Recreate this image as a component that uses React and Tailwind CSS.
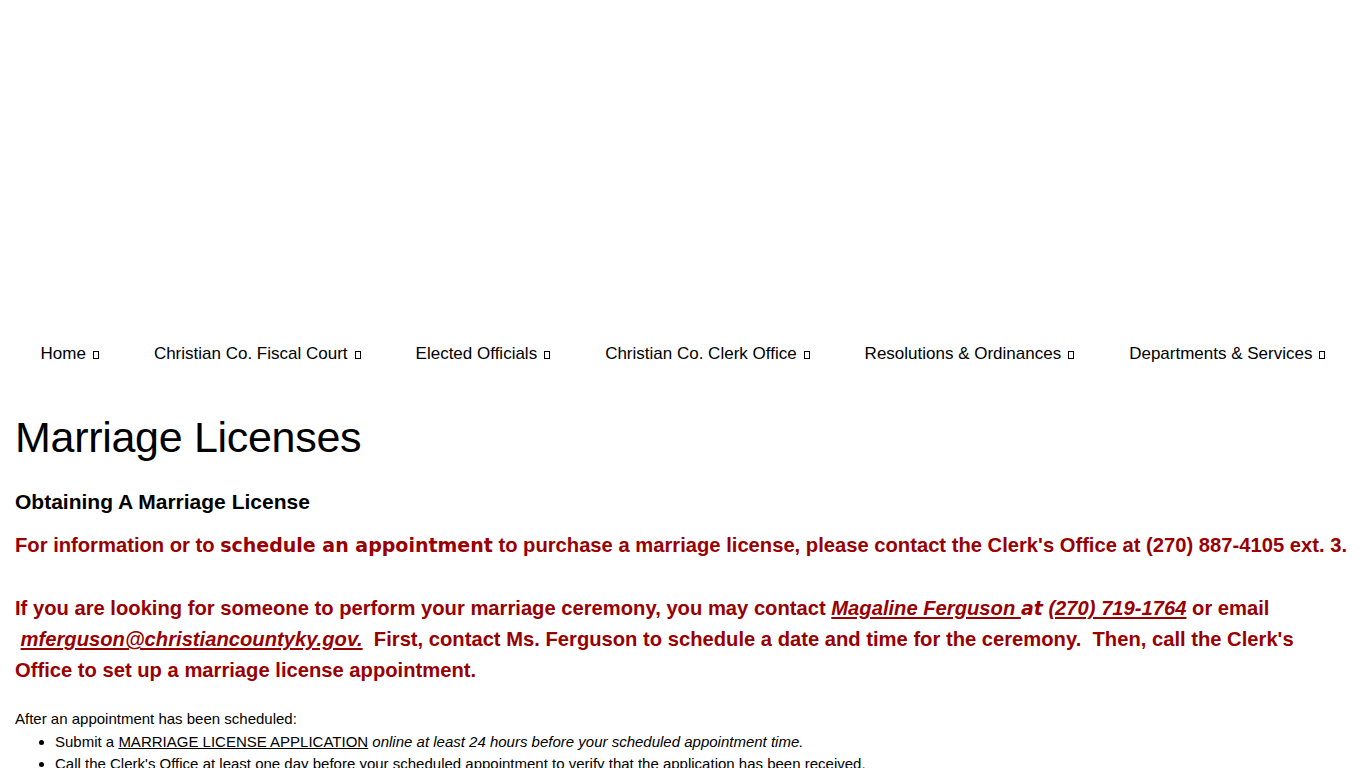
import React from "react";

const Box = () => (
  <span className="inline-block w-[6px] h-[8px] border border-black ml-[7px] align-[0px]" />
);

const navItems = [
  "Home",
  "Christian Co. Fiscal Court",
  "Elected Officials",
  "Christian Co. Clerk Office",
  "Resolutions & Ordinances",
  "Departments & Services",
];

export default function App() {
  return (
    <div className="bg-white text-black min-h-[768px] font-['Liberation_Sans',Arial,sans-serif]">
      <div className="h-[330px]" />
      <nav className="flex justify-center gap-[55px] h-[47px] items-center text-[17px]">
        {navItems.map((n) => (
          <span key={n} className="whitespace-nowrap">
            {n}
            <Box />
          </span>
        ))}
      </nav>
      <main className="px-[15px]">
        <h1 className="text-[43px] leading-[52px] mt-[34px] tracking-[-0.3px]">Marriage Licenses</h1>
        <h2 className="text-[21px] font-bold mt-[26px] leading-[26px]">Obtaining A Marriage License</h2>
        <div className="text-[#990000] font-bold text-[20.2px] leading-[31px] mt-[15px]">
          <p>
            For information or to{" "}
            <span className="font-['DejaVu_Sans',sans-serif] text-[19px]">schedule an appointment</span>{" "}
            to purchase a marriage license, please contact the Clerk's Office at (270) 887-4105 ext. 3.
          </p>
          <p>&nbsp;</p>
          <p className="mt-[1px]">
            If you are looking for someone to perform your marriage ceremony, you may contact{" "}
            <span className="italic underline">Magaline Ferguson </span>
            <span className="italic font-['DejaVu_Sans',sans-serif] text-[19px]">at</span>{" "}
            <span className="italic underline">(270) 719-1764</span> or email
            <br />
            &nbsp;<span className="italic underline">mferguson@christiancountyky.gov.</span>&nbsp; First, contact
            Ms. Ferguson to schedule a date and time for the ceremony.&nbsp; Then, call the Clerk's Office to set up
            a marriage license appointment.
          </p>
        </div>
        <p className="text-[15px] mt-[23px] leading-[20px]">After an appointment has been scheduled:</p>
        <ul className="list-disc pl-[40px] text-[15px] leading-[22px] mt-[2px]">
          <li>
            Submit a <span className="underline">MARRIAGE LICENSE APPLICATION</span>{" "}
            <span className="italic">online at least 24 hours before your scheduled appointment time.</span>
          </li>
          <li>
            Call the Clerk's Office at least one day before your scheduled appointment to verify that the
            application has been received.
          </li>
        </ul>
      </main>
    </div>
  );
}
